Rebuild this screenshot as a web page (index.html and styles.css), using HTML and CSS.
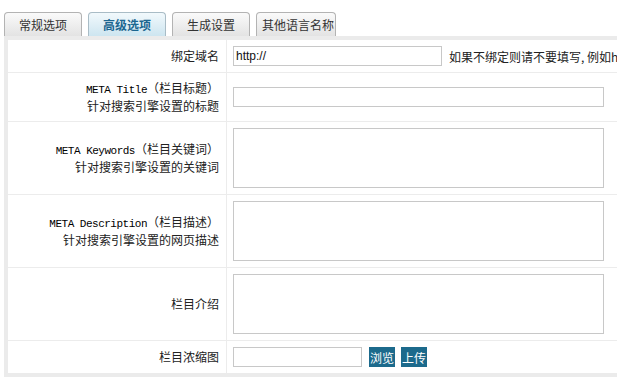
FILE: index.html
```html
<!DOCTYPE html>
<html lang="zh-CN">
<head>
  <meta charset="UTF-8">
  <meta name="viewport" content="width=device-width, initial-scale=1.0">
  <title>栏目设置 - 高级选项</title>
  <link rel="stylesheet" href="styles.css">
</head>
<body>
  <div class="tabs">
    <div class="tab">常规选项</div>
    <div class="tab tab-active">高级选项</div>
    <div class="tab">生成设置</div>
    <div class="tab tab-wide">其他语言名称</div>
  </div>

  <div class="panel">
    <form class="form">
      <div class="row">
        <div class="label">绑定域名</div>
        <div class="field">
          <input type="text" class="input input-domain" value="http://">
          <span class="hint">如果不绑定则请不要填写, 例如http://www.dedecms.com</span>
        </div>
      </div>
      <div class="row">
        <div class="label">
          <span><span class="en">META Title</span>（栏目标题）</span>
          <span>针对搜索引擎设置的标题</span>
        </div>
        <div class="field">
          <input type="text" class="input input-long">
        </div>
      </div>
      <div class="row">
        <div class="label">
          <span><span class="en">META Keywords</span>（栏目关键词）</span>
          <span>针对搜索引擎设置的关键词</span>
        </div>
        <div class="field">
          <textarea class="textarea"></textarea>
        </div>
      </div>
      <div class="row">
        <div class="label">
          <span><span class="en">META Description</span>（栏目描述）</span>
          <span>针对搜索引擎设置的网页描述</span>
        </div>
        <div class="field">
          <textarea class="textarea"></textarea>
        </div>
      </div>
      <div class="row">
        <div class="label">栏目介绍</div>
        <div class="field">
          <textarea class="textarea"></textarea>
        </div>
      </div>
      <div class="row row-last">
        <div class="label">栏目浓缩图</div>
        <div class="field">
          <input type="text" class="input input-short">
          <button type="button" class="btn">浏览</button>
          <button type="button" class="btn">上传</button>
        </div>
      </div>
    </form>
  </div>
</body>
</html>
```

FILE: styles.css
```css
/***----BASIC----***/
body {
  margin: 0;
  overflow: hidden;
  background: #fff;
  color: #222;
  font-family: "Noto Sans CJK SC", "Liberation Sans", sans-serif;
  font-size: 12px;
}

/***----Tabs----***/
.tabs {
  display: flex;
  gap: 6px;
  padding: 12px 0 0 4px;
}
.tab {
  box-sizing: border-box;
  width: 78px;
  height: 24px;
  line-height: 23px;
  text-align: center;
  color: #333;
  background: linear-gradient(#fafafa, #e3e3e3);
  border: 1px solid #b3b3b3;
  border-bottom: none;
  border-radius: 4px 4px 0 0;
}
.tab-active {
  color: #1b6690;
  font-weight: 700;
  background: linear-gradient(#f2f9fc, #cde5f0);
  border-color: #a9bcc6;
}
.tab-wide {
  width: 80px;
  text-align: left;
  padding-left: 5px;
  white-space: nowrap;
  overflow: hidden;
}

/***----Panel----***/
.panel {
  width: 760px;
  margin-left: 4px;
  padding: 4px 0 4px 4px;
  background: #ebebeb;
}
.form {
  margin: 0;
  background: #fff;
}
.row {
  display: grid;
  grid-template-columns: 219px 1fr;
  border-bottom: 1px solid #ececec;
}
.row-last {
  border-bottom: none;
}
.label {
  box-sizing: border-box;
  display: flex;
  flex-direction: column;
  justify-content: center;
  align-items: flex-end;
  padding: 6px 7px;
  line-height: 18px;
  text-align: right;
  border-right: 1px solid #ececec;
  white-space: nowrap;
}
.label > span {
  height: 18px;
}
.label .en {
  font-family: "Liberation Mono", monospace;
  font-size: 11px;
  line-height: 1;
  letter-spacing: -0.5px;
  color: #000;
}
.field {
  display: flex;
  align-items: center;
  padding: 6px;
}

/***----Inputs----***/
.input {
  box-sizing: border-box;
  height: 20px;
  padding: 0 2px;
  border: 1px solid #c8c8c8;
  font-family: "Liberation Sans", Arial, sans-serif;
  font-size: 12px;
  color: #111;
}
.input-domain { width: 209px; }
.input-long { width: 371px; }
.input-short { width: 129px; }
.textarea {
  display: block;
  box-sizing: border-box;
  width: 371px;
  height: 60px;
  border: 1px solid #c8c8c8;
  resize: none;
}
.hint {
  margin-left: 7px;
  white-space: nowrap;
  color: #222;
}
.btn {
  width: 26px;
  height: 20px;
  padding: 0;
  margin-left: 6px;
  border: none;
  background: #1c6a8c;
  color: #fff;
  font-family: inherit;
  font-size: 12px;
}
.input-short + .btn {
  margin-left: 7px;
}
```
